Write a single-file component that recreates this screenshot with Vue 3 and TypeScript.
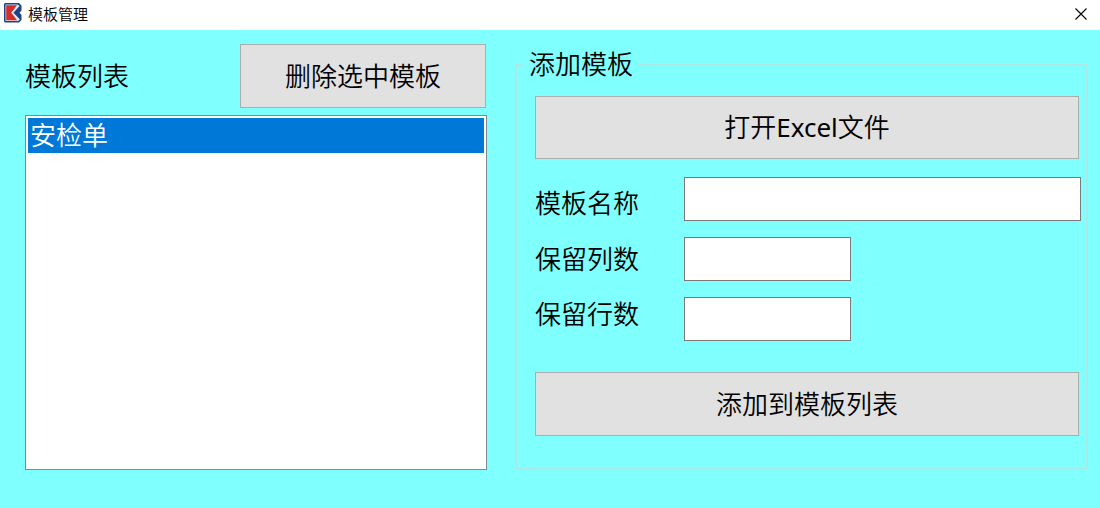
<script setup lang="ts">
import { ref } from 'vue'

const templates = ref<string[]>(['安检单'])
const selected = ref<number>(0)
const templateName = ref('')
const keptColumns = ref('')
const keptRows = ref('')

function removeSelected(): void {
  templates.value.splice(selected.value, 1)
  selected.value = 0
}

function addTemplate(): void {
  const name = templateName.value.trim()
  if (name) templates.value.push(name)
}
</script>

<template>
  <div class="window">
    <header class="titlebar">
      <svg class="logo" viewBox="0 0 18 20" aria-hidden="true">
        <path d="M1 0H15L17.500 2.500V7.500L15.500 9.700L17.500 12V17L15 19.500H1L0 18.500V1Z" fill="#1c4587" />
        <path d="M1.500 1.500H13.500L15.500 3L9.500 9.700L16 16.500L14 18H1.500Z" fill="#dfe3ee" />
        <path d="M2.200 2.200H13L7.500 9.700L13 17.300H2.200Z" fill="#d02f2c" />
        <path d="M7.500 9.700L14.500 2.800M7.500 9.700L14.500 16.600" stroke="#e8ecf4" stroke-width="1" />
      </svg>
      <h1 class="title">模板管理</h1>
      <button class="close" type="button" aria-label="关闭">
        <svg viewBox="0 0 12 12" aria-hidden="true">
          <path d="M0.500 0.500L11.500 11.500M11.500 0.500L0.500 11.500" stroke="#000" stroke-width="1.100" fill="none" />
        </svg>
      </button>
    </header>

    <main class="content">
      <section class="list-panel">
        <div class="list-head">
          <h2 id="list-title" class="list-title">模板列表</h2>
          <button class="btn delete" type="button" @click="removeSelected">删除选中模板</button>
        </div>
        <ul class="listbox" role="listbox" aria-labelledby="list-title" tabindex="0">
          <li
            v-for="(name, index) in templates"
            :key="index"
            class="item"
            :class="{ active: index === selected }"
            role="option"
            :aria-selected="index === selected"
            @click="selected = index"
          >
            {{ name }}
          </li>
        </ul>
      </section>

      <fieldset class="group">
        <legend class="legend">添加模板</legend>
        <form class="form" @submit.prevent="addTemplate">
          <button class="btn open" type="button">打开<span class="latin">Excel</span>文件</button>
          <div class="fields">
            <label class="label low" for="name">模板名称</label>
            <input id="name" v-model="templateName" class="box" type="text" />
            <label class="label" for="columns">保留列数</label>
            <input id="columns" v-model="keptColumns" class="box short" type="text" />
            <label class="label high" for="rows">保留行数</label>
            <input id="rows" v-model="keptRows" class="box short" type="text" />
          </div>
          <button class="btn add" type="submit">添加到模板列表</button>
        </form>
      </fieldset>
    </main>
  </div>
</template>

<style>
body {
  margin: 0;
  background: #80ffff;
}
</style>

<style scoped>
.window {
  display: flex;
  flex-direction: column;
  min-height: 100vh;
  background: #80ffff;
  color: #000;
  font: 350 26px/35px "Noto Sans", "Noto Sans CJK SC DemiLight", "Noto Sans CJK SC", sans-serif;
}

.titlebar {
  display: flex;
  align-items: center;
  height: 30px;
  padding: 0 13px 2px 4px;
  box-sizing: border-box;
  background: #fff;
}

.logo {
  width: 18px;
  height: 20px;
  margin-bottom: 2px;
}

.title {
  flex: 1;
  margin: 0 0 0 6px;
  font-size: 15px;
  font-weight: 350;
  line-height: 20px;
}

.close {
  display: flex;
  padding: 0;
  border: 0;
  background: none;
}

.close svg {
  width: 12px;
  height: 12px;
}

.content {
  display: grid;
  grid-template-columns: 462fr 573fr;
  gap: 28px;
  flex: 1;
  padding: 14px 12px 38px 25px;
}

.list-panel {
  display: flex;
  flex-direction: column;
  gap: 7px;
  min-width: 0;
}

.list-head {
  display: flex;
  align-items: center;
  justify-content: space-between;
  padding-right: 1px;
}

.list-title {
  margin: 0;
  font-size: inherit;
  font-weight: inherit;
}

.btn {
  height: 64px;
  padding: 0;
  border: 1px solid #adadad;
  border-radius: 0;
  background: #e1e1e1;
  color: inherit;
  font: inherit;
}

.delete {
  width: 246px;
}

.latin {
  font-weight: 400;
}

.listbox {
  flex: 1;
  margin: 0;
  padding: 2px;
  border: 1px solid #828790;
  background: #fff;
  list-style: none;
  outline: none;
}

.item {
  padding-left: 2px;
}

.item.active {
  background: #0078d7;
  color: #fff;
}

.group {
  min-width: 0;
  margin: 3px 0 0;
  padding: 0;
  border: 2px solid #ace8e8;
}

.legend {
  margin-left: 7px;
  padding: 0 5px;
}

.form {
  display: flex;
  flex-direction: column;
  padding: 14px 5px 30px 18px;
}

.open,
.add {
  margin-right: 2px;
}

.open {
  height: 63px;
}

.fields {
  display: grid;
  grid-template-columns: 149px 1fr;
  row-gap: 16px;
  padding: 18px 0 31px;
}

.label {
  align-self: center;
}

.label.low {
  align-self: end;
}

.label.high {
  align-self: start;
}

.box {
  box-sizing: border-box;
  width: 100%;
  height: 44px;
  padding: 0 6px;
  border: 1px solid #7a7a7a;
  border-radius: 0;
  background: #fff;
  font: inherit;
  outline: none;
}

.box.short {
  width: 167px;
}
</style>
